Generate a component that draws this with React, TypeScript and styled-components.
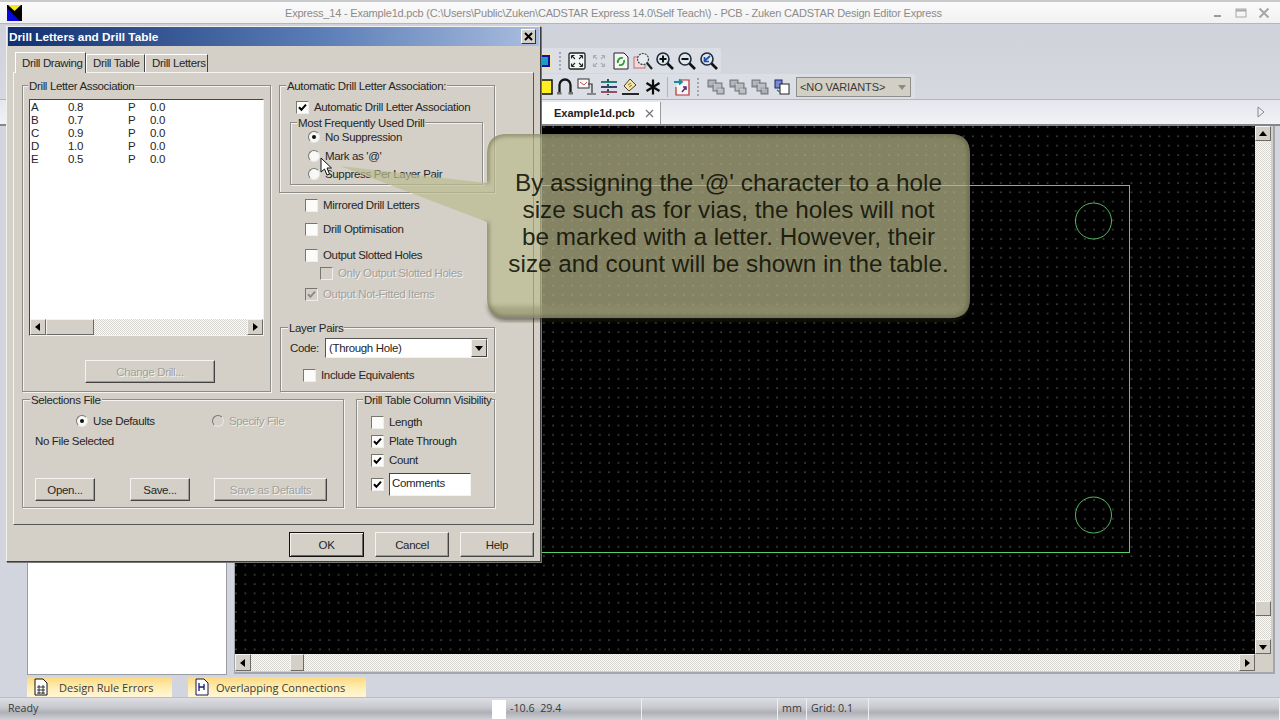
import React from "react";
import styled, { createGlobalStyle } from "styled-components";

const GlobalStyle = createGlobalStyle`
  html, body { margin: 0; padding: 0; width: 1280px; height: 720px; overflow: hidden; background: #d3d6df; }
  #root { width: 1280px; height: 720px; }
  * { box-sizing: border-box; }
`;

const FONT = `"Liberation Sans", Arial, sans-serif`;
const FACE = "#d4d0c8";

/* ---------- main window ---------- */
const Window = styled.div`
  position: relative;
  width: 1280px;
  height: 720px;
  display: flex;
  flex-direction: column;
  overflow: hidden;
  font-family: ${FONT};
  background: #d2d4de;
`;

const TitleBar = styled.div`
  height: 24px;
  flex: none;
  display: flex;
  align-items: center;
  padding: 0 7px;
  border-top: 2px solid #c9cacd;
  border-bottom: 1px solid #b4b6bc;
  background: linear-gradient(#fbfbfb, #f1f1f2);
`;

const TitleText = styled.div`
  flex: none;
  margin-left: 263px;
  width: 660px;
  font-size: 11px;
  letter-spacing: -0.2px;
  color: #8b8b8b;
  white-space: nowrap;
`;

const WindowButtons = styled.div`
  margin-left: auto;
  display: flex;
  gap: 9px;
  padding-right: 2px;
`;

const Ribbon = styled.div`
  height: 76px;
  flex: none;
  padding: 24px 0 0 533px;
  display: flex;
  flex-direction: column;
  background: linear-gradient(#cfd2da, #d6d8e0);
  border-bottom: 1px solid #b3b5bd;
`;

const Toolbar = styled.div<{ $width: number; $mt?: number }>`
  width: ${(p) => p.$width}px;
  height: 25px;
  flex: none;
  margin-top: ${(p) => p.$mt ?? 0}px;
  display: flex;
  align-items: center;
  background: #dcdee6;
  border-radius: 0 3px 3px 0;
  padding-left: 1px;
`;

const ToolSlot = styled.div<{ $width?: number }>`
  width: ${(p) => p.$width ?? 22}px;
  height: 22px;
  flex: none;
  display: grid;
  place-items: center;
`;

const Gripper = styled.div<{ $margin: number }>`
  width: 4px;
  height: 18px;
  flex: none;
  margin: 0 ${(p) => p.$margin}px;
  background: repeating-linear-gradient(#a4a6ae 0 2px, transparent 2px 4px);
  background-size: 2px 100%;
  background-repeat: no-repeat;
`;

const ToolSep = styled.div`
  width: 1px;
  height: 20px;
  flex: none;
  margin: 0 3px;
  background: #b2b4bc;
`;

const VariantCombo = styled.div`
  margin-left: 3px;
  width: 115px;
  height: 20px;
  display: flex;
  align-items: center;
  justify-content: space-between;
  padding: 0 4px 0 3px;
  font-size: 11px;
  letter-spacing: -0.1px;
  color: #3a3a3a;
  background: #d2cfc4;
  border: 1px solid #8e8e8c;
`;

const TabStrip = styled.div`
  height: 26px;
  flex: none;
  display: flex;
  align-items: flex-end;
  padding: 0 14px 0 500px;
  background: linear-gradient(#e4e6ec, #f1f2f5);
  border-bottom: 2px solid #85868c;
`;

const DocTab = styled.div`
  width: 161px;
  height: 22px;
  display: flex;
  align-items: center;
  justify-content: space-between;
  padding: 0 5px 0 54px;
  font-size: 11px;
  font-weight: bold;
  color: #222;
  background: #fff;
  border-right: 1px solid #9b9ca2;
`;

const StripArrow = styled.div`
  margin-left: auto;
  align-self: center;
  display: flex;
`;

const Main = styled.div`
  flex: none;
  height: 551px;
  display: flex;
  padding-left: 27px;
  background: #d2d4de;
`;

const SidePanel = styled.div`
  width: 200px;
  height: 549px;
  flex: none;
  background: #fff;
  border: 1px solid #9a9ca4;
  border-top: none;
`;

const DesignFrame = styled.div`
  margin-left: 7px;
  width: 1041px;
  height: 548px;
  display: grid;
  grid-template-columns: 1020px 16px;
  grid-template-rows: 528px 17px;
  border-right: 2px solid #a4a6ae;
  border-bottom: 2px solid #a4a6ae;
  border-left: 1px solid #a4a6ae;
  background: ${FACE};
`;

const Canvas = styled.div`
  position: relative;
  overflow: hidden;
  background-color: #000;
  background-image: radial-gradient(circle at 1px 1px, #404040 0.6px, transparent 1px);
  background-size: 9.33px 9.33px;
`;

const BoardDrawing = styled.svg`
  position: absolute;
  inset: 0;
`;

const dither = `repeating-conic-gradient(#d8d6d0 0 25%, #fbfbf8 0 50%) 0 0 / 2px 2px`;

const VScroll = styled.div`
  display: flex;
  flex-direction: column;
  background: ${dither};
`;

const HScroll = styled.div<{ $height?: number }>`
  height: ${(p) => p.$height ?? 17}px;
  flex: none;
  display: flex;
  background: ${dither};
`;

const ScrollButton = styled.div<{ $thumb?: number; $offset?: number; $end?: boolean }>`
  flex: none;
  display: grid;
  place-items: center;
  width: ${(p) => p.$thumb ?? 16}px;
  margin-left: ${(p) => p.$offset ?? 0}px;
  ${(p) => (p.$end ? "margin-left: auto;" : "")}
  background: ${FACE};
  border: 1px solid;
  border-color: #f4f3ef #6a6a66 #6a6a66 #f4f3ef;
`;

const VButton = styled.div<{ $offset?: number; $end?: boolean }>`
  flex: none;
  height: 15px;
  display: grid;
  place-items: center;
  margin-top: ${(p) => p.$offset ?? 0}px;
  ${(p) => (p.$end ? "margin-top: auto;" : "")}
  background: ${FACE};
  border: 1px solid;
  border-color: #f4f3ef #6a6a66 #6a6a66 #f4f3ef;
`;

const OutputTabs = styled.div`
  height: 20px;
  flex: none;
  display: flex;
  padding-left: 27px;
  gap: 16px;
  background: #d2d4de;
`;

const OutputTab = styled.div<{ $width: number; $gap: number }>`
  width: ${(p) => p.$width}px;
  display: flex;
  align-items: center;
  gap: ${(p) => p.$gap}px;
  padding-left: 6px;
  font-family: "Open Sans", ${FONT};
  font-size: 11px;
  color: #3b3b3b;
  background: linear-gradient(#fdd87e, #fff0b8 60%, #fff6d8);
`;

const StatusBar = styled.div`
  flex: 1;
  display: flex;
  align-items: stretch;
  font-family: "Open Sans", ${FONT};
  font-size: 10.7px;
  color: #3a3a3a;
  border-top: 1px solid #bcbec5;
  background: linear-gradient(#dcdee3, #c6c8ce 45%, #aeb0b6 65%, #d0d2d8);
`;

const StatusCell = styled.div<{ $width?: number }>`
  ${(p) => (p.$width ? `width: ${p.$width}px; flex: none;` : "flex: 1;")}
  display: flex;
  align-items: center;
  padding: 0 0 3px 4px;
  border-right: 1px solid #eceef2;
`;

const ReadyCell = styled(StatusCell)`
  padding-left: 8px;
  border-right: none;
`;

const Swatch = styled.div`
  width: 14px;
  flex: none;
  background: #fff;
  margin: 2px 0 1px;
`;

/* ---------- dialog ---------- */
const Dialog = styled.div`
  position: absolute;
  left: 6px;
  top: 26px;
  width: 535px;
  height: 536px;
  padding: 0 1px;
  background: ${FACE};
  font-size: 11.5px;
  letter-spacing: -0.35px;
  color: #262626;
  border: 1px solid;
  border-color: #f3f2ee #3e3e3c #3e3e3c #f3f2ee;
  box-shadow: 1px 1px 0 #777;
`;

const DialogTitle = styled.div`
  height: 19px;
  display: flex;
  align-items: center;
  justify-content: space-between;
  padding: 0 3px 0 1px;
  font-size: 11.8px;
  font-weight: bold;
  letter-spacing: 0;
  color: #fff;
  background: linear-gradient(90deg, #123070, #5d7fb8 60%, #a9bddf);
`;

const CloseBox = styled.div`
  width: 15px;
  height: 15px;
  display: grid;
  place-items: center;
  background: ${FACE};
  border: 1px solid;
  border-color: #fff #333 #333 #fff;
`;

const DialogBody = styled.div`
  margin: 0 5px;
`;

const TabRow = styled.div`
  display: flex;
  align-items: flex-end;
  height: 26px;
  padding-left: 2px;
`;

const PageTab = styled.div<{ $active?: boolean; $width: number }>`
  position: relative;
  z-index: ${(p) => (p.$active ? 1 : 0)};
  width: ${(p) => p.$width}px;
  height: ${(p) => (p.$active ? 21 : 18)}px;
  margin-bottom: ${(p) => (p.$active ? -1 : 0)}px;
  padding-left: 6px;
  line-height: ${(p) => (p.$active ? 20 : 17)}px;
  background: ${FACE};
  border-top: 1px solid #fff;
  border-left: 1px solid #fff;
  border-right: 1px solid #444;
  white-space: nowrap;
`;

const TabPanel = styled.div`
  height: 453px;
  padding: 12px 0 0 8px;
  border: 1px solid;
  border-color: #f4f3ef #555 #555 #f4f3ef;
`;

const TopGrid = styled.div`
  display: grid;
  grid-template-columns: 249px 216px;
  column-gap: 8px;
  height: 307px;
`;

const BottomRow = styled.div`
  margin-top: 7px;
  height: 109px;
  display: grid;
  grid-template-columns: 322px 139px;
  column-gap: 12px;
`;

const GroupBox = styled.div`
  position: relative;
  border: 1px solid #8c8c88;
  box-shadow: 1px 1px 0 #f4f3ef, inset 1px 1px 0 #f4f3ef;
`;

const GroupTitle = styled.span<{ $left?: number }>`
  position: absolute;
  left: ${(p) => p.$left ?? 6}px;
  top: -6px;
  padding: 0 1px;
  line-height: 13px;
  background: ${FACE};
  white-space: nowrap;
`;

const AssociationGroup = styled(GroupBox)`
  padding: 13px 6px 0;
`;

const ListBox = styled.div`
  width: 235px;
  height: 237px;
  display: flex;
  flex-direction: column;
  background: #fff;
  border: 1px solid;
  border-color: #444 #f4f3ef #f4f3ef #444;
`;

const ListRows = styled.div`
  flex: 1;
  padding: 1px 0 0 1px;
`;

const ListRow = styled.div`
  display: grid;
  grid-template-columns: 37px 60px 22px 30px;
  line-height: 13px;
  height: 13px;
`;

const ChangeDrill = styled.div`
  margin-top: 24px;
`;

const RightColumn = styled.div`
  display: flex;
  flex-direction: column;
`;

const AutoGroup = styled(GroupBox)`
  height: 108px;
  flex: none;
  padding: 13px 0 0 10px;
`;

const InnerGroup = styled(GroupBox)`
  margin-top: 7px;
  width: 193px;
  height: 63px;
  padding: 6px 0 0 17px;
  display: flex;
  flex-direction: column;
  gap: 2.5px;
`;

const OptionList = styled.div`
  display: flex;
  flex-direction: column;
  padding-left: 26px;
`;

const OptionRow = styled.label<{ $mt?: number; $ml?: number; $gap?: number; $off?: boolean }>`
  display: flex;
  align-items: center;
  height: 16px;
  flex: none;
  gap: ${(p) => p.$gap ?? 5}px;
  margin-top: ${(p) => p.$mt ?? 0}px;
  margin-left: ${(p) => p.$ml ?? 0}px;
  white-space: nowrap;
  ${(p) => (p.$off ? "color: #a2a09a; text-shadow: 1px 1px 0 #f4f3ef;" : "")}
`;

const LayerGroup = styled(GroupBox)`
  height: 65px;
  margin: auto 0 0 1px;
  padding: 10px 0 0 9px;
`;

const CodeRow = styled.div`
  display: flex;
  align-items: center;
`;

const CodeLabel = styled.span`
  width: 35px;
  flex: none;
`;

const CodeCombo = styled.div`
  width: 163px;
  height: 20px;
  display: flex;
  align-items: center;
  justify-content: space-between;
  padding-left: 3px;
  background: #fff;
  border: 1px solid;
  border-color: #555 #f4f3ef #f4f3ef #555;
`;

const ComboButton = styled.div`
  width: 16px;
  height: 100%;
  display: grid;
  place-items: center;
  background: ${FACE};
  border: 1px solid;
  border-color: #f4f3ef #444 #444 #f4f3ef;
`;

const SelectionsGroup = styled(GroupBox)`
  padding: 13px 0 0 12px;
`;

const RadioGrid = styled.div`
  display: grid;
  grid-template-columns: 136px auto;
  margin-left: 41px;
`;

const PlainText = styled.div`
  margin-top: 4px;
  height: 16px;
  line-height: 16px;
`;

const FileButtons = styled.div`
  margin-top: 29px;
  display: flex;
`;

const PushButton = styled.div<{ $width: number; $height?: number; $ml?: number; $off?: boolean; $def?: boolean }>`
  width: ${(p) => p.$width}px;
  height: ${(p) => p.$height ?? 23}px;
  margin-left: ${(p) => p.$ml ?? 0}px;
  flex: none;
  display: grid;
  place-items: center;
  background: ${FACE};
  border: 1px solid;
  border-color: ${(p) => (p.$def ? "#111" : "#f4f3ef #444 #444 #f4f3ef")};
  box-shadow: ${(p) => (p.$def ? "inset 1px 1px 0 #f4f3ef, inset -1px -1px 0 #666" : "inset -1px -1px 0 #9a9a96")};
  ${(p) => (p.$off ? "color: #a2a09a; text-shadow: 1px 1px 0 #f4f3ef;" : "")}
`;

const ColumnGroup = styled(GroupBox)`
  padding: 14px 0 0 14px;
  display: flex;
  flex-direction: column;
  gap: 3px;
`;

const CommentsRow = styled(OptionRow)`
  margin-top: 2px;
  height: 23px;
`;

const CommentsField = styled.div`
  width: 82px;
  height: 23px;
  padding: 3px 0 0 2px;
  background: #fff;
  border: 1px solid;
  border-color: #444 #f4f3ef #f4f3ef #444;
`;

const ButtonRow = styled.div`
  margin-top: 7px;
  display: flex;
  padding-left: 276px;
  gap: 11px;
`;

const Box = styled.span<{ $off?: boolean }>`
  width: 13px;
  height: 13px;
  flex: none;
  display: grid;
  place-items: center;
  background: ${(p) => (p.$off ? FACE : "#fbfbfa")};
  border: 1px solid;
  border-color: #77776f #eee #eee #77776f;
`;

const RadioDot = styled.span<{ $off?: boolean }>`
  width: 12px;
  height: 12px;
  flex: none;
  display: grid;
  place-items: center;
  border-radius: 50%;
  background: ${(p) => (p.$off ? FACE : "#f8f8f6")};
  border: 1px solid;
  border-color: #77776f #e8e8e4 #e8e8e4 #77776f;
`;

const RadioMark = styled.span`
  width: 4px;
  height: 4px;
  border-radius: 50%;
  background: #111;
`;

/* ---------- callout + pointer ---------- */
const Callout = styled.div`
  position: absolute;
  left: 330px;
  top: 130px;
  width: 650px;
  height: 196px;
  padding-left: 157px;
`;

const CalloutShape = styled.svg`
  position: absolute;
  inset: 0;
`;

const CalloutText = styled.div`
  position: relative;
  width: 483px;
  padding-top: 39px;
  text-align: center;
  font-family: ${FONT};
  font-size: 24.3px;
  line-height: 27px;
  color: rgba(16, 16, 6, 0.9);
`;

const CalloutLine = styled.div`
  white-space: nowrap;
`;

const MouseCursor = styled.svg`
  position: absolute;
  left: 320px;
  top: 157px;
`;

/* ---------- drawings ---------- */
const Arrow = ({ dir, color = "#000" }: { dir: "up" | "down" | "left" | "right"; color?: string }) => {
  const pts = { up: "4,1 0,6 8,6", down: "0,2 8,2 4,7", left: "6,0 6,8 1,4", right: "2,0 2,8 7,4" }[dir];
  return (
    <svg width="8" height="8" viewBox="0 0 8 8">
      <polygon points={pts} fill={color} />
    </svg>
  );
};

const Check = ({ color = "#000" }: { color?: string }) => (
  <svg width="9" height="9" viewBox="0 0 9 9">
    <path d="M1 4.2 L3.4 6.8 L8 1.6" fill="none" stroke={color} strokeWidth="2" />
  </svg>
);

const Lens = ({ children }: { children?: React.ReactNode }) => (
  <svg width="20" height="20" viewBox="0 0 20 20">
    <circle cx="8" cy="8" r="6" fill="#dfe6ec" stroke="#1d2b3a" strokeWidth="1.6" />
    <path d="M12.5 12.5 L18 18" stroke="#111" strokeWidth="2.6" />
    {children}
  </svg>
);

const FitIcon = ({ dim }: { dim?: boolean }) => (
  <svg width="18" height="18" viewBox="0 0 18 18">
    {!dim && <rect x="1" y="1" width="16" height="16" rx="1.5" fill="#f4f5f7" stroke="#222" strokeWidth="1.3" />}
    <path
      d="M3.5 3.5 L7 7 M3.5 3.5 H6.5 M3.5 3.5 V6.5 M14.5 3.5 L11 7 M14.5 3.5 H11.5 M14.5 3.5 V6.5 M3.5 14.5 L7 11 M3.5 14.5 H6.5 M3.5 14.5 V11.5 M14.5 14.5 L11 11 M14.5 14.5 H11.5 M14.5 14.5 V11.5"
      fill="none"
      stroke={dim ? "#a9abb2" : "#222"}
      strokeWidth="1.1"
    />
  </svg>
);

const Stacked = ({ dim }: { dim?: boolean }) => (
  <svg width="20" height="18" viewBox="0 0 20 18">
    <rect x="2" y="2" width="8" height="7" fill="#9b9da2" stroke="#77797e" />
    <rect x="7" y="5" width="9" height="8" fill="#a8aaaf" stroke="#77797e" />
    <rect x="11" y="10" width="7" height="6" fill={dim ? "#8f9196" : "#a8aaaf"} stroke="#77797e" />
    <path d="M3 4 H9 M3 6 H9 M8 7 H15 M8 9 H15 M8 11 H15 M12 12 H17 M12 14 H17" stroke="#dcdde0" strokeWidth="0.8" />
  </svg>
);

const DocIconA = () => (
  <svg width="16" height="18" viewBox="0 0 16 18">
    <path d="M2 1 H10 L14 5 V17 H2 Z" fill="#fff" stroke="#111" />
    <path d="M4 9 H12 M4 12 H12 M4 15 H12 M6 7 V16 M10 7 V16" stroke="#222" strokeWidth="0.9" />
  </svg>
);

const DocIconB = () => (
  <svg width="16" height="18" viewBox="0 0 16 18">
    <path d="M2 1 H10 L14 5 V17 H2 Z" fill="#fff" stroke="#15155a" />
    <path d="M5 5 V13 M5 9 H10 M10 6 V12" stroke="#1a1a70" strokeWidth="1.3" fill="none" />
  </svg>
);

const rows = [
  ["A", "0.8"],
  ["B", "0.7"],
  ["C", "0.9"],
  ["D", "1.0"],
  ["E", "0.5"],
];

const Tick = ({ on, off, children, ...rest }: { on?: boolean; off?: boolean; children?: React.ReactNode; $mt?: number; $ml?: number }) => (
  <OptionRow $off={off} {...rest}>
    <Box $off={off}>{on && <Check color={off ? "#8c8c86" : "#000"} />}</Box>
    {children}
  </OptionRow>
);

const Radio = ({ on, off, children }: { on?: boolean; off?: boolean; children: React.ReactNode }) => (
  <OptionRow $off={off}>
    <RadioDot $off={off}>{on && <RadioMark />}</RadioDot>
    {children}
  </OptionRow>
);

export default function App() {
  return (
    <Window>
      <GlobalStyle />
      <TitleBar>
        <svg width="15" height="16" viewBox="0 0 15 16">
          <rect width="15" height="16" fill="#000" />
          <polygon points="0,3 0,16 13,16" fill="#0808d8" />
          <polygon points="1,0 14,0 7.5,6" fill="#f6e820" />
        </svg>
        <TitleText>Express_14 - Example1d.pcb  (C:\Users\Public\Zuken\CADSTAR Express 14.0\Self Teach\) - PCB - Zuken CADSTAR Design Editor Express</TitleText>
        <WindowButtons>
          <svg width="14" height="12" viewBox="0 0 14 12"><path d="M3 9 H10" stroke="#9a9a9a" strokeWidth="2" /></svg>
          <svg width="14" height="12" viewBox="0 0 14 12"><rect x="2" y="2" width="10" height="8" fill="none" stroke="#a8a8a8" /><path d="M2 3.5 H12" stroke="#a8a8a8" strokeWidth="2" /></svg>
          <svg width="14" height="12" viewBox="0 0 14 12"><path d="M2.5 1.5 L11.5 10.5 M11.5 1.5 L2.5 10.5" stroke="#a6a6a6" strokeWidth="2" /></svg>
        </WindowButtons>
      </TitleBar>

      <Ribbon>
        <Toolbar $width={188}>
          <ToolSlot>
            <svg width="16" height="18" viewBox="0 0 16 18"><rect x="1" y="1" width="14" height="16" fill="#f2e4a0" /><rect x="2" y="4" width="10" height="10" fill="#1f9fc0" stroke="#1010b0" strokeWidth="2" /></svg>
          </ToolSlot>
          <Gripper $margin={3} />
          <ToolSlot><FitIcon /></ToolSlot>
          <ToolSlot><FitIcon dim /></ToolSlot>
          <ToolSlot>
            <svg width="18" height="20" viewBox="0 0 18 20">
              <path d="M2 2 H12 L16 6 V18 H2 Z" fill="#f5f6f4" stroke="#222" />
              <path d="M6 12 A4 4 0 0 1 11 7 M12 9 A4 4 0 0 1 7 14" fill="none" stroke="#2f9a34" strokeWidth="1.8" />
            </svg>
          </ToolSlot>
          <ToolSlot>
            <svg width="20" height="20" viewBox="0 0 20 20">
              <rect x="1" y="6" width="11" height="11" fill="#f2d9dc" stroke="#c26a72" />
              <circle cx="10" cy="8" r="5.5" fill="#e6ebee" stroke="#3a4650" strokeWidth="1.2" strokeDasharray="2 1" />
              <path d="M14 12 L19 18" stroke="#222" strokeWidth="2.2" />
            </svg>
          </ToolSlot>
          <ToolSlot><Lens><path d="M4.5 8 H11.5 M8 4.5 V11.5" stroke="#111" strokeWidth="2" /></Lens></ToolSlot>
          <ToolSlot><Lens><path d="M4.5 8 H11.5" stroke="#111" strokeWidth="2" /></Lens></ToolSlot>
          <ToolSlot><Lens><path d="M11 5 L5.5 10 M5.5 6 V10.5 H10" fill="none" stroke="#1f4fa8" strokeWidth="1.7" /></Lens></ToolSlot>
        </Toolbar>
        <Toolbar $width={382} $mt={1}>
          <ToolSlot $width={20}>
            <svg width="18" height="18" viewBox="0 0 18 18"><rect x="1" y="2" width="16" height="14" fill="#ffee20" stroke="#111" strokeWidth="1.5" /></svg>
          </ToolSlot>
          <ToolSlot>
            <svg width="18" height="18" viewBox="0 0 18 18"><path d="M3.5 15 V7 A5.5 5.5 0 0 1 14.5 7 V15" fill="none" stroke="#161616" strokeWidth="2.3" /><rect x="1" y="14" width="4.5" height="2.5" fill="#6d7166" /><rect x="12.5" y="14" width="4.5" height="2.5" fill="#6d7166" /></svg>
          </ToolSlot>
          <ToolSlot>
            <svg width="20" height="20" viewBox="0 0 20 20"><rect x="1" y="2" width="11" height="9" fill="#f7f7f4" stroke="#333" /><path d="M3 5 L7 8 L10 5" fill="none" stroke="#c0555a" /><path d="M11 7 H15 V16 M10 17 H19" fill="none" stroke="#333" strokeWidth="1.2" /></svg>
          </ToolSlot>
          <ToolSlot>
            <svg width="20" height="20" viewBox="0 0 20 20"><path d="M2 5 H18" stroke="#2a7d78" strokeWidth="2" /><path d="M2 10 H18" stroke="#3a3a7a" strokeWidth="2" /><path d="M2 15 H18" stroke="#a04a6a" strokeWidth="2" /><path d="M9 2 V18" stroke="#1e5d5a" strokeWidth="2" strokeDasharray="3 2" /></svg>
          </ToolSlot>
          <ToolSlot>
            <svg width="20" height="20" viewBox="0 0 20 20"><path d="M9 2 L15 8 L8 14 L3 9 Z" fill="#f4e6a8" stroke="#4a4020" /><path d="M7 8 L10 6 M8 10 L11 8" stroke="#7a6a30" /><path d="M1 17 H18" stroke="#111" strokeWidth="1.8" /></svg>
          </ToolSlot>
          <ToolSlot>
            <svg width="18" height="18" viewBox="0 0 18 18"><path d="M9 1.5 V16.5 M2.5 5 L15.5 13 M15.5 5 L2.5 13" stroke="#0c0c0c" strokeWidth="2.2" /></svg>
          </ToolSlot>
          <ToolSep />
          <ToolSlot>
            <svg width="20" height="20" viewBox="0 0 20 20"><path d="M8 3 H17 V18 H4 V10" fill="#f5f5f2" stroke="#b03038" strokeWidth="1.2" /><path d="M2 5 H9 M7 2.5 L10 5 L7 7.5" fill="none" stroke="#1c8a9c" strokeWidth="1.8" /><path d="M10 15 L14 10 M11 10 H14 V13" fill="none" stroke="#5a2a80" strokeWidth="1.5" /></svg>
          </ToolSlot>
          <Gripper $margin={4} />
          <ToolSlot><Stacked /></ToolSlot>
          <ToolSlot><Stacked /></ToolSlot>
          <ToolSlot><Stacked dim /></ToolSlot>
          <ToolSlot>
            <svg width="18" height="18" viewBox="0 0 18 18"><rect x="2" y="2" width="7" height="8" fill="#7a8ad0" stroke="#20206a" /><rect x="7" y="6" width="9" height="10" fill="#fff" stroke="#222" /><path d="M4 12 L7 14" stroke="#1c8a5c" strokeWidth="1.5" /></svg>
          </ToolSlot>
          <VariantCombo>
            &lt;NO VARIANTS&gt;
            <Arrow dir="down" color="#8a8a86" />
          </VariantCombo>
        </Toolbar>
      </Ribbon>

      <TabStrip>
        <DocTab>
          Example1d.pcb
          <svg width="11" height="11" viewBox="0 0 11 11"><path d="M2 2 L9 9 M9 2 L2 9" stroke="#77787c" strokeWidth="1.3" /></svg>
        </DocTab>
        <StripArrow>
          <svg width="10" height="12" viewBox="0 0 10 12"><polygon points="2,1 8,6 2,11" fill="#eceef2" stroke="#888a92" /></svg>
        </StripArrow>
      </TabStrip>

      <Main>
        <SidePanel />
        <DesignFrame>
          <Canvas>
            <BoardDrawing width="1020" height="528" viewBox="0 0 1020 528">
              <rect x="100.5" y="59.5" width="794" height="367" fill="none" stroke="#58d068" />
              <circle cx="858.5" cy="95" r="18" fill="none" stroke="#52b860" />
              <circle cx="858.5" cy="389" r="18" fill="none" stroke="#52b860" />
            </BoardDrawing>
          </Canvas>
          <VScroll>
            <VButton><Arrow dir="up" /></VButton>
            <VButton $offset={460} />
            <VButton $end><Arrow dir="down" /></VButton>
          </VScroll>
          <HScroll>
            <ScrollButton><Arrow dir="left" /></ScrollButton>
            <ScrollButton $thumb={14} $offset={39} />
            <ScrollButton $end><Arrow dir="right" /></ScrollButton>
          </HScroll>
        </DesignFrame>
      </Main>

      <OutputTabs>
        <OutputTab $width={145} $gap={10}><DocIconA />Design Rule Errors</OutputTab>
        <OutputTab $width={178} $gap={6}><DocIconB />Overlapping Connections</OutputTab>
      </OutputTabs>

      <StatusBar>
        <ReadyCell $width={492}>Ready</ReadyCell>
        <Swatch />
        <StatusCell $width={136}>-10.6&nbsp;&nbsp;29.4</StatusCell>
        <StatusCell $width={136} />
        <StatusCell $width={29}>mm</StatusCell>
        <StatusCell $width={62}>Grid: 0.1</StatusCell>
        <StatusCell />
      </StatusBar>

      <Dialog>
        <DialogTitle>
          Drill Letters and Drill Table
          <CloseBox>
            <svg width="9" height="9" viewBox="0 0 9 9"><path d="M1 1 L8 8 M8 1 L1 8" stroke="#000" strokeWidth="2" /></svg>
          </CloseBox>
        </DialogTitle>
        <DialogBody>
          <TabRow>
            <PageTab $active $width={71}>Drill Drawing</PageTab>
            <PageTab $width={59}>Drill Table</PageTab>
            <PageTab $width={63}>Drill Letters</PageTab>
          </TabRow>
          <TabPanel>
            <TopGrid>
              <AssociationGroup>
                <GroupTitle $left={5}>Drill Letter Association</GroupTitle>
                <ListBox>
                  <ListRows>
                    {rows.map(([letter, size]) => (
                      <ListRow key={letter}>
                        <span>{letter}</span>
                        <span>{size}</span>
                        <span>P</span>
                        <span>0.0</span>
                      </ListRow>
                    ))}
                  </ListRows>
                  <HScroll $height={16}>
                    <ScrollButton $thumb={16}><Arrow dir="left" /></ScrollButton>
                    <ScrollButton $thumb={48} />
                    <ScrollButton $thumb={16} $end><Arrow dir="right" /></ScrollButton>
                  </HScroll>
                </ListBox>
                <ChangeDrill>
                  <PushButton $width={130} $ml={56} $off>Change Drill...</PushButton>
                </ChangeDrill>
              </AssociationGroup>

              <RightColumn>
                <AutoGroup>
                  <GroupTitle>Automatic Drill Letter Association:</GroupTitle>
                  <Tick on $ml={6}>Automatic Drill Letter Association</Tick>
                  <InnerGroup>
                    <GroupTitle>Most Frequently Used Drill</GroupTitle>
                    <Radio on>No Suppression</Radio>
                    <Radio>Mark as '@'</Radio>
                    <Radio>Suppress Per Layer Pair</Radio>
                  </InnerGroup>
                </AutoGroup>
                <OptionList>
                  <Tick $mt={4}>Mirrored Drill Letters</Tick>
                  <Tick $mt={8}>Drill Optimisation</Tick>
                  <Tick $mt={10}>Output Slotted Holes</Tick>
                  <Tick off $mt={2} $ml={15}>Only Output Slotted Holes</Tick>
                  <Tick on off $mt={5}>Output Not-Fitted Items</Tick>
                </OptionList>
                <LayerGroup>
                  <GroupTitle $left={7}>Layer Pairs</GroupTitle>
                  <CodeRow>
                    <CodeLabel>Code:</CodeLabel>
                    <CodeCombo>
                      (Through Hole)
                      <ComboButton><Arrow dir="down" /></ComboButton>
                    </CodeCombo>
                  </CodeRow>
                  <Tick $mt={9} $ml={13}>Include Equivalents</Tick>
                </LayerGroup>
              </RightColumn>
            </TopGrid>

            <BottomRow>
              <SelectionsGroup>
                <GroupTitle $left={7}>Selections File</GroupTitle>
                <RadioGrid>
                  <Radio on>Use Defaults</Radio>
                  <Radio off>Specify File</Radio>
                </RadioGrid>
                <PlainText>No File Selected</PlainText>
                <FileButtons>
                  <PushButton $width={60}>Open...</PushButton>
                  <PushButton $width={60} $ml={35}>Save...</PushButton>
                  <PushButton $width={113} $ml={24} $off>Save as Defaults</PushButton>
                </FileButtons>
              </SelectionsGroup>
              <ColumnGroup>
                <GroupTitle>Drill Table Column Visibility</GroupTitle>
                <Tick>Length</Tick>
                <Tick on>Plate Through</Tick>
                <Tick on>Count</Tick>
                <CommentsRow>
                  <Box><Check /></Box>
                  <CommentsField>Comments</CommentsField>
                </CommentsRow>
              </ColumnGroup>
            </BottomRow>
          </TabPanel>
          <ButtonRow>
            <PushButton $width={75} $height={25} $def>OK</PushButton>
            <PushButton $width={74} $height={25}>Cancel</PushButton>
            <PushButton $width={74} $height={25}>Help</PushButton>
          </ButtonRow>
        </DialogBody>
      </Dialog>

      <Callout>
        <CalloutShape width="650" height="196" viewBox="0 0 650 196">
          <defs>
            <filter id="soft" x="-5%" y="-5%" width="110%" height="110%">
              <feGaussianBlur stdDeviation="2" />
            </filter>
            <clipPath id="calloutClip">
              <path d="M10 36 L157 53 V24 Q157 4 177 4 H620 Q640 4 640 24 V168 Q640 188 620 188 H177 Q157 188 157 168 V92 Z" />
            </clipPath>
          </defs>
          <path
            d="M157 168 Q157 191 177 191 H620 Q640 191 640 168 V176 H157 Z"
            fill="#2a2a1c"
            fillOpacity="0.55"
            filter="url(#soft)"
          />
          <path
            d="M10 36 L157 53 V24 Q157 4 177 4 H620 Q640 4 640 24 V168 Q640 188 620 188 H177 Q157 188 157 168 V92 Z"
            fill="#bcbc8e"
            fillOpacity="0.7"
          />
          <path d="M212 55.5 H640" stroke="#86d060" strokeOpacity="0.6" />
          <g clipPath="url(#calloutClip)">
            <path
              d="M157 53 V24 Q157 4 177 4 H620 Q640 4 640 24 V168 Q640 188 620 188 H177 Q157 188 157 168 V92"
              fill="none"
              stroke="#4e4e34"
              strokeOpacity="0.55"
              strokeWidth="4"
              filter="url(#soft)"
            />
          </g>
        </CalloutShape>
        <CalloutText>
          <CalloutLine>By assigning the '@' character to a hole</CalloutLine>
          <CalloutLine>size such as for vias, the holes will not</CalloutLine>
          <CalloutLine>be marked with a letter. However, their</CalloutLine>
          <CalloutLine>size and count will be shown in the table.</CalloutLine>
        </CalloutText>
      </Callout>

      <MouseCursor width="13" height="20" viewBox="0 0 13 20">
        <path d="M1 1 V15 L4.5 12 L7 18 L9.5 17 L7 11 H11.5 Z" fill="#fff" stroke="#111" strokeWidth="1" />
      </MouseCursor>
    </Window>
  );
}
